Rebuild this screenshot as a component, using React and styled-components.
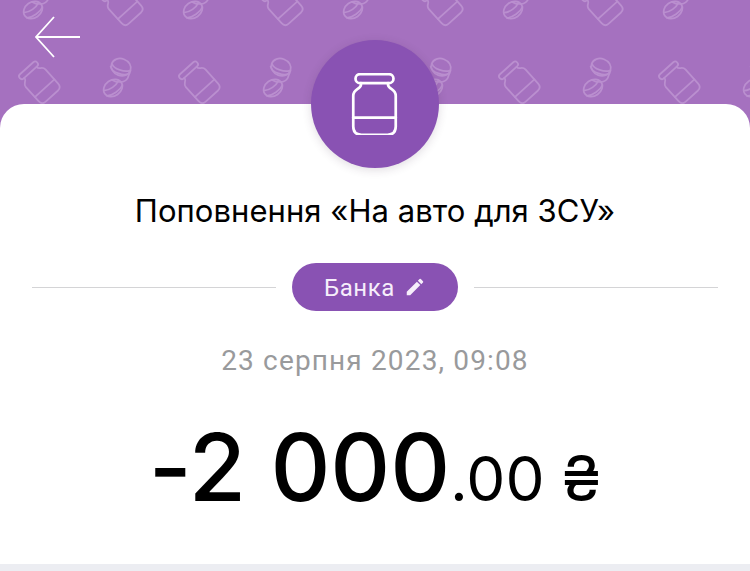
import React from "react";
import styled, { createGlobalStyle } from "styled-components";

const Global = createGlobalStyle`
  html, body { margin: 0; padding: 0; background: #fff; }
  body { font-family: Inter, "Liberation Sans", sans-serif; color: #000; }
`;
const Page = styled.div`
  width: 750px; height: 571px; overflow: hidden;
  display: flex; flex-direction: column; background: #fff;
`;
const Header = styled.header`
  position: relative; flex: 0 0 128px; height: 128px; background: #a571bf; overflow: hidden;
`;
const Pattern = styled.svg`
  position: absolute; inset: 0; width: 100%; height: 100%;
`;
const BackButton = styled.button`
  position: absolute; left: 33px; top: 15px; padding: 0; border: 0; background: none;
  width: 48px; height: 44px; display: block;
`;
const Card = styled.main`
  position: relative; flex: 1; margin-top: -24px; background: #fff;
  border-radius: 24px 24px 0 0; display: flex; flex-direction: column; align-items: center;
`;
const Badge = styled.div`
  width: 128px; height: 128px; margin-top: -64px; border-radius: 50%; background: #8952b3;
  box-shadow: 0 2px 10px rgba(60, 40, 70, .16);
  display: flex; align-items: center; justify-content: center;
  padding-right: 2px; box-sizing: border-box;
`;
const Title = styled.h1`
  margin: 23px 0 0; font-size: 31px; line-height: 40px; font-weight: 400; letter-spacing: 0.05px;
  white-space: nowrap;
`;
const DividerRow = styled.div`
  align-self: stretch; margin: 32px 32px 0; display: flex; align-items: center; gap: 16px;
`;
const Rule = styled.span`
  flex: 1; height: 1px; background: #d4d4d6;
`;
const Pill = styled.div`
  width: 166px; height: 48px; border-radius: 24px; background: #8952b3; color: #f6eefb;
  display: flex; align-items: center; justify-content: center; gap: 9px;
  font: 400 24px/32px Roboto, sans-serif; letter-spacing: 0.6px; box-sizing: border-box;
`;
const PillLabel = styled.span`
  display: block; padding-top: 2px;
`;
const DateText = styled.div`
  margin-top: 32px; font: 400 28px/36px Roboto, sans-serif; letter-spacing: 1.15px; color: #999a9c;
`;
const Amount = styled.div`
  margin-top: 40px; display: flex; align-items: baseline; line-height: 96px; font-size: 93px;
  font-weight: 500; letter-spacing: -0.2px; white-space: nowrap;
`;
const Minor = styled.span`
  font-size: 62px; font-weight: 400; letter-spacing: 0;
`;
const Currency = styled.span`
  font-size: 63px; font-weight: 400; margin-left: 17px;
`;
const Footer = styled.div`
  flex: 0 0 7px; background: #ecedf2;
`;
const Spacer = styled.div`flex: 1;`;

const Jar = ({ s = "#fff", w = 3 }) => (
  <g fill="none" stroke={s} strokeWidth={w} strokeLinejoin="round" strokeLinecap="round">
    <rect x="-21" y="-33" width="42" height="10" rx="5" />
    <path d="M-15 -23 v2 q0 2 -4 4.5 q-4.5 3 -4.5 7.5 v34 q0 9 9 9 h29 q9 0 9 -9 v-34 q0 -4.5 -4.5 -7.5 q-4 -2.5 -4 -4.5 v-2" />
    <path d="M-23.5 15 h47" />
  </g>
);

const SmallJar = ({ x, y }) => (
  <g transform={`translate(${x} ${y}) rotate(-42) scale(0.56)`}>
    <Jar s="#ba8fcf" w="3.2" />
  </g>
);

const Coins = ({ x, y }) => (
  <g transform={`translate(${x} ${y})`} fill="none" stroke="#ba8fcf" strokeWidth="1.7" strokeLinecap="round">
    <g transform="translate(0 -9) rotate(20)">
      <ellipse cx="0" cy="-3" rx="10" ry="8.5" />
      <path d="M-9.5 -3 c3 4 15 4 19 0 M-10 0 c3 5 16 5 20 0" />
      <path d="M10 -3 v8 c-1 6 -9 8 -14 7" />
    </g>
    <g transform="translate(-7 9) rotate(-35)">
      <ellipse cx="0" cy="0" rx="10" ry="8" />
      <path d="M-9 -3 c5 3 13 3 18 0 M-9.5 3 c5 3 14 3 19 0" />
    </g>
  </g>
);

const Back = () => (
  <svg width="48" height="44" viewBox="0 0 48 44" fill="none" stroke="#fff" strokeWidth="1.8">
    <path d="M21 2 L3 22 L21 42 M3 22 H47" />
  </svg>
);

const Pencil = () => (
  <svg width="22" height="22" viewBox="0 0 24 24" fill="#f6eefb">
    <path d="M3 17.25V21h3.75L17.81 9.94l-3.75-3.75L3 17.25zM20.71 7.04a1 1 0 0 0 0-1.41l-2.34-2.34a1 1 0 0 0-1.41 0l-1.83 1.83 3.75 3.75 1.83-1.83z" />
  </svg>
);

const jarsTop = [122, 282, 442, 602];
const coinsTop = [40, 200, 360, 520, 680];
const jarsBottom = [39, 199, 519, 679];
const coinsBottom = [120, 280, 440, 600, 760];

export default function App() {
  return (
    <>
      <Global />
      <Page>
        <Header>
          <Pattern viewBox="0 0 750 128">
            {coinsTop.map((x) => <Coins key={x} x={x} y={1} />)}
            {jarsTop.map((x) => <SmallJar key={x} x={x} y={4} />)}
            {jarsBottom.map((x) => <SmallJar key={x} x={x} y={82} />)}
            {coinsBottom.map((x) => <Coins key={x} x={x} y={79} />)}
          </Pattern>
          <BackButton aria-label="Назад"><Back /></BackButton>
        </Header>
        <Card>
          <Badge>
            <svg width="47" height="62" viewBox="-26 -34 52 68"><Jar w={3} /></svg>
          </Badge>
          <Title>Поповнення «На авто для ЗСУ»</Title>
          <DividerRow>
            <Rule />
            <Pill><PillLabel>Банка</PillLabel><Pencil /></Pill>
            <Rule />
          </DividerRow>
          <DateText>23 серпня 2023, 09:08</DateText>
          <Amount>
            -2 000<Minor>.00</Minor><Currency>₴</Currency>
          </Amount>
          <Spacer />
        </Card>
        <Footer />
      </Page>
    </>
  );
}
